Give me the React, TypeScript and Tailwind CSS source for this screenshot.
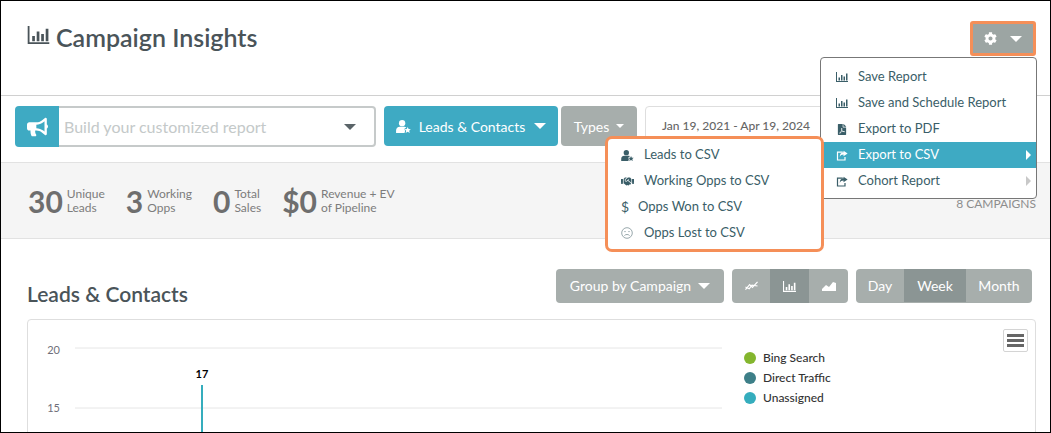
import { FaBullhorn, FaCog, FaFilePdf, FaHandshake } from "react-icons/fa";

const Caret = ({ className = "" }: { className?: string }) => (
  <span className={`inline-block w-0 h-0 border-x-[6px] border-x-transparent border-t-[6px] ${className}`} />
);

const BarsIcon = ({ className = "" }: { className?: string }) => (
  <svg viewBox="0 0 24 20" className={className} fill="currentColor">
    <path d="M0 0h2v18h22v2H0z" />
    <path d="M5 11h3v6H5zM10 6h3v11h-3zM15 9h3v8h-3zM20 3h3v14h-3z" />
  </svg>
);

const ShareIcon = ({ className = "" }: { className?: string }) => (
  <svg viewBox="0 0 16 14" className={className} fill="none" stroke="currentColor" strokeWidth="1.6">
    <path d="M9 2.5H2v10.5h10V9" />
    <path d="M10 0.5l5.5 3.8L10 8V5.8C7.5 5.8 6 6.8 5 9c0-3.6 1.8-6 5-6.2z" fill="currentColor" stroke="none" />
  </svg>
);

// person with a small star at the lower right
const UserStarIcon = ({ className = "" }: { className?: string }) => (
  <svg viewBox="0 0 16 14" className={className} fill="currentColor">
    <circle cx="6.5" cy="3.4" r="3.4" />
    <path d="M0 14v-2.6C0 9 1.8 7.4 4 7.4h5c.8 0 1.5.2 2.1.6L9 9.4l.7 2.4-.6 2.2z" />
    <path d="M12.5 7.6l1 2.2 2.4.2-1.8 1.6.6 2.4-2.2-1.3-2.2 1.3.6-2.4-1.8-1.6 2.4-.2z" />
  </svg>
);

const FrownIcon = () => (
  <svg viewBox="0 0 12 12" className="w-[12px] h-[12px] text-[#7f9297]" fill="none" stroke="currentColor" strokeWidth="0.8">
    <circle cx="6" cy="6" r="5.3" />
    <circle cx="4" cy="4.6" r="0.7" fill="currentColor" stroke="none" />
    <circle cx="8" cy="4.6" r="0.7" fill="currentColor" stroke="none" />
    <path d="M3.4 8.6C4.6 7.1 7.4 7.1 8.6 8.6" />
  </svg>
);

const stats = [
  { num: "30", a: "Unique", b: "Leads", gap: "mr-[21px]" },
  { num: "3", a: "Working", b: "Opps", gap: "mr-[21px]" },
  { num: "0", a: "Total", b: "Sales", gap: "mr-[21px]" },
  { num: "$0", a: "Revenue + EV", b: "of Pipeline", gap: "" },
];

const reportMenu = [
  { label: "Save Report", icon: <BarsIcon className="w-[12px] h-[10px]" /> },
  { label: "Save and Schedule Report", icon: <BarsIcon className="w-[12px] h-[10px]" /> },
  { label: "Export to PDF", icon: <FaFilePdf className="w-[12px] h-[11px]" /> },
  { label: "Export to CSV", icon: <ShareIcon className="w-[12px] h-[11px]" />, active: true, sub: true },
  { label: "Cohort Report", icon: <ShareIcon className="w-[12px] h-[11px]" />, sub: true },
];

const csvMenu = [
  { label: "Leads to CSV", icon: <UserStarIcon className="w-[13px] h-[11px]" />, ml: "ml-[10px]" },
  { label: "Working Opps to CSV", icon: <FaHandshake className="w-[13px] h-[11px]" />, ml: "ml-[10px]" },
  { label: "Opps Won to CSV", icon: <span className="w-[7px] text-[14px] leading-none">$</span>, ml: "ml-[4px]" },
  { label: "Opps Lost to CSV", icon: <FrownIcon />, ml: "ml-[10px]" },
];

const legend = [
  { label: "Bing Search", color: "bg-[#84b62e]" },
  { label: "Direct Traffic", color: "bg-[#3d7f88]" },
  { label: "Unassigned", color: "bg-[#35adbd]" },
];

export default function App() {
  return (
    <div className="relative w-[1051px] h-[433px] overflow-hidden border border-black bg-white font-['Lato','Noto_Sans',sans-serif] text-[#4a5459]">
      {/* header */}
      <div className="h-[95px] pl-[26px] pr-[14px] pt-[20px] flex items-start justify-between border-b border-[#d0d0d0]">
        <h1 className="flex items-center gap-[6px] -mt-px text-[25px] leading-[34px] font-semibold text-[#4a5459]">
          <BarsIcon className="w-[23px] h-[18px] -mt-[4px]" />
          Campaign Insights
        </h1>
        <button className="w-[66px] h-[35px] flex items-center justify-center gap-[13px] rounded-[3px] border-[3px] border-[#f58f58] bg-[#9ca5a3] text-white">
          <FaCog className="w-[13px] h-[13px]" />
          <Caret className="border-t-white" />
        </button>
      </div>

      {/* toolbar */}
      <div className="h-[67px] pt-[10px] pl-[14px] flex items-start border-b border-[#e2e2e2]">
        <div className="w-[361px] h-[41px] flex">
          <div className="w-[44px] flex items-center justify-center rounded-l-[4px] bg-[#3eaac3] text-white">
            <FaBullhorn className="w-[21px] h-[20px]" />
          </div>
          <div className="flex-1 flex items-center justify-between pl-[5px] pr-[18px] rounded-r-[4px] border-2 border-l-0 border-[#c6caca] text-[16px] text-[#c4c9c9]">
            Build your customized report
            <Caret className="border-t-[#5a6468]" />
          </div>
        </div>
        <button className="ml-[8px] w-[174px] h-[40px] flex items-center justify-center gap-[8px] rounded-[4px] bg-[#3eaac3] text-white text-[14px]">
          <UserStarIcon className="w-[15px] h-[13px]" />
          Leads &amp; Contacts
          <Caret className="ml-[1px] border-t-white" />
        </button>
        <button className="ml-[3px] w-[76px] h-[40px] flex items-center justify-center gap-[7px] rounded-[4px] bg-[#a7aeac] text-white text-[14px]">
          Types
          <Caret className="!border-x-[4px] !border-t-[4px] border-t-white" />
        </button>
        <div className="ml-[8px] w-[392px] h-[40px] pl-[16px] flex items-center rounded-[4px] border border-[#dedede] text-[12px] font-medium text-[#666]">
          Jan 19, 2021 - Apr 19, 2024
        </div>
      </div>

      {/* stats */}
      <div className="h-[76px] pl-[27px] pr-[14px] flex items-center bg-[#f5f5f5] border-b border-[#e2e2e2]">
        {stats.map((s) => (
          <div key={s.num} className={`flex items-center gap-[4px] ${s.gap}`}>
            <span className="text-[30px] leading-none font-bold text-[#6e6e6e]">{s.num}</span>
            <span className="text-[12px] leading-[14px] text-[#7c7c7c]">
              {s.a}
              <br />
              {s.b}
            </span>
          </div>
        ))}
        <span className="ml-auto mt-[7px] text-[12px] text-[#8d8d8d]">8 CAMPAIGNS</span>
      </div>

      {/* leads & contacts */}
      <div className="pt-[30px] pl-[26px] pr-[14px]">
        <div className="flex items-start">
          <h2 className="mt-[11px] text-[21px] leading-[28px] font-semibold text-[#4a5459]">Leads &amp; Contacts</h2>
          <button className="ml-auto w-[168px] h-[34px] pb-px flex items-center justify-center gap-[7px] rounded-[4px] bg-[#a7aeac] text-white text-[14px]">
            Group by Campaign
            <Caret className="border-t-white" />
          </button>
          <div className="ml-[8px] h-[34px] flex rounded-[4px] overflow-hidden bg-[#a7aeac] text-white">
            <span className="w-[38px] flex items-center justify-center">
              <svg viewBox="0 0 14 10" className="w-[13px] h-[10px]" fill="none" stroke="currentColor" strokeWidth="1.3">
                <path d="M0.5 9L5 3.5l3 3L13.5 0.5" />
                <path d="M0.5 6l4 2 3-4 6 1" />
              </svg>
            </span>
            <span className="w-[39px] flex items-center justify-center bg-[#8b9594]">
              <BarsIcon className="w-[13px] h-[11px]" />
            </span>
            <span className="w-[39px] flex items-center justify-center">
              <svg viewBox="0 0 14 10" className="w-[14px] h-[10px]" fill="currentColor">
                <path d="M0 10V8l4-4 3 2 4-5 3 1v8z" />
              </svg>
            </span>
          </div>
          <div className="ml-[8px] mr-[4px] h-[34px] pb-px flex rounded-[4px] overflow-hidden bg-[#a7aeac] text-white text-[14px]">
            <span className="w-[48px] flex items-center justify-center">Day</span>
            <span className="w-[62px] flex items-center justify-center bg-[#8b9594]">Week</span>
            <span className="w-[66px] flex items-center justify-center">Month</span>
          </div>
        </div>

        <div className="relative mt-[11px] h-[140px] flex rounded-[4px] border border-[#dedede]">
          <svg viewBox="0 0 700 112" className="w-[700px] h-[112px] shrink-0">
            <line x1="47" y1="28" x2="694" y2="28" stroke="#e6e6e6" />
            <line x1="47" y1="88" x2="694" y2="88" stroke="#e6e6e6" />
            <text x="32" y="34" textAnchor="end" fontSize="11" fill="#6f6f7a">20</text>
            <text x="32" y="92" textAnchor="end" fontSize="11" fill="#6f6f7a">15</text>
            <text x="174" y="58" textAnchor="middle" fontSize="11" fontWeight="700" fill="#000">17</text>
            <rect x="173" y="65" width="2" height="47" fill="#35adbd" />
          </svg>
          <ul className="ml-[16px] mt-[31px] flex flex-col gap-[6px] text-[12px] leading-[14px] font-medium text-[#333]">
            {legend.map((l) => (
              <li key={l.label} className="flex items-center gap-[7px]">
                <span className={`w-[12px] h-[12px] rounded-full ${l.color}`} />
                {l.label}
              </li>
            ))}
          </ul>
          <button className="absolute right-[7px] top-[9px] w-[25px] h-[23px] flex flex-col items-center justify-center gap-[2px] rounded-[2px] border border-[#d4d4d4]">
            <span className="w-[17px] h-[3px] bg-[#666]" />
            <span className="w-[17px] h-[3px] bg-[#666]" />
            <span className="w-[17px] h-[3px] bg-[#666]" />
          </button>
        </div>
      </div>

      {/* report dropdown */}
      <div className="absolute left-[819px] top-[56px] w-[217px] h-[142px] pt-[6px] rounded-[4px] border border-[#777] bg-white text-[13px] text-[#3a5e68]">
        {reportMenu.map((m) => (
          <div
            key={m.label}
            className={`h-[26px] flex items-center pl-[15px] pr-[5px] ${m.active ? "bg-[#3eaac3] text-white" : ""}`}
          >
            <span className="w-[12px] flex justify-center">{m.icon}</span>
            <span className="ml-[10px]">{m.label}</span>
            {m.sub && (
              <span
                className={`ml-auto w-0 h-0 border-y-[5px] border-y-transparent border-l-[5px] ${m.active ? "border-l-white" : "border-l-[#c8c8c8]"}`}
              />
            )}
          </div>
        ))}
      </div>

      {/* csv dropdown */}
      <div className="absolute left-[604px] top-[135px] w-[219px] h-[116px] pt-[3px] pl-[13px] rounded-[7px] border-[3px] border-[#f58f58] bg-white text-[13px] text-[#3a5e68]">
        {csvMenu.map((m) => (
          <div key={m.label} className="h-[26px] flex items-center">
            <span className="w-[13px] flex justify-start">{m.icon}</span>
            <span className={m.ml}>{m.label}</span>
          </div>
        ))}
      </div>
    </div>
  );
}
